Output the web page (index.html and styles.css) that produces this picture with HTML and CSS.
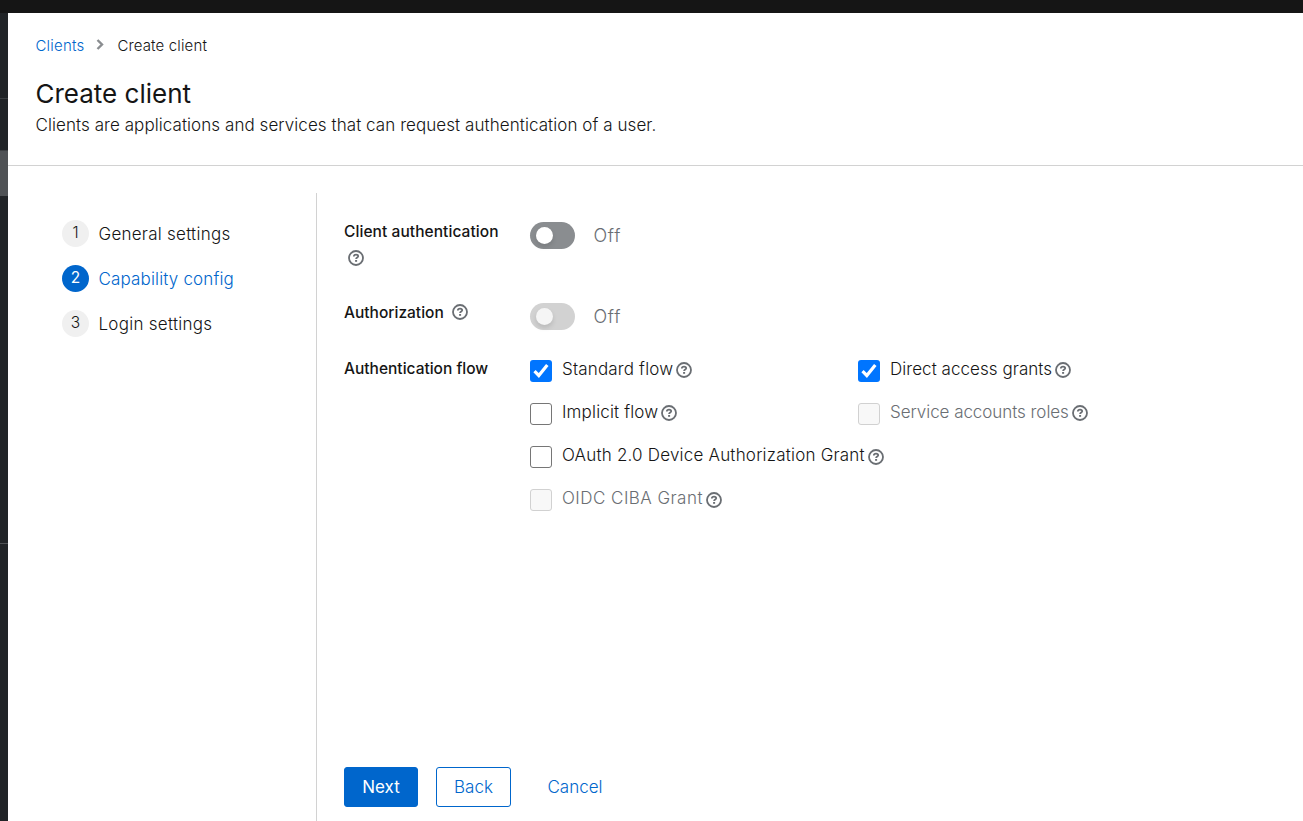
FILE: index.html
```
<!DOCTYPE html>
<html lang="en">
<head>
<meta charset="utf-8">
<title>Create client</title>
<link rel="stylesheet" href="styles.css">
</head>
<body>
<svg width="0" height="0" class="defs">
  <symbol id="help" viewBox="0 0 16 16">
    <circle cx="8" cy="8" r="7" fill="none" stroke="currentColor" stroke-width="1.8"/>
    <path d="M5.8 6.5C5.9 5.2 6.8 4.7 8 4.7C9.3 4.7 10.2 5.4 10.2 6.3C10.2 7.6 8.1 7.5 8.1 9.1" fill="none" stroke="currentColor" stroke-width="1.8"/>
    <rect x="7.1" y="10" width="2" height="1.8" fill="currentColor"/>
  </symbol>
</svg>
<div class="topbar"></div>
<div class="shell">
  <aside class="sidebar">
    <div class="side-block side-first"></div>
    <div class="side-block side-second"></div>
    <div class="side-block side-active"></div>
    <div class="side-block side-third"></div>
    <div class="side-block side-last"></div>
  </aside>
  <main class="main">
    <header class="header">
      <nav class="breadcrumb">
        <a class="link crumb-link">Clients</a>
        <svg class="chevron" viewBox="0 0 8 11"><path d="M1.5 1L6 5.5L1.5 10" fill="none" stroke="#8a8d90" stroke-width="2.4"/></svg>
        <span class="crumb-current">Create client</span>
      </nav>
      <h1 class="title">Create client</h1>
      <p class="description">Clients are applications and services that can request authentication of a user.</p>
    </header>
    <div class="wizard">
      <ol class="steps">
        <li class="step"><span class="num">1</span><span class="step-name step-a">General settings</span></li>
        <li class="step current"><span class="num">2</span><span class="step-name step-b">Capability config</span></li>
        <li class="step"><span class="num">3</span><span class="step-name step-c">Login settings</span></li>
      </ol>
      <section class="content">
        <form class="form">
          <div class="row row-auth">
            <div class="label stacked"><span class="label-a">Client authentication</span><svg class="help"><use href="#help"/></svg></div>
            <div class="control"><span class="switch"><span class="knob"></span></span><span class="off">Off</span></div>
          </div>
          <div class="row row-authz">
            <div class="label"><span class="label-b">Authorization</span><svg class="help"><use href="#help"/></svg></div>
            <div class="control"><span class="switch disabled"><span class="knob"></span></span><span class="off">Off</span></div>
          </div>
          <div class="row row-flow">
            <div class="label"><span class="label-c">Authentication flow</span></div>
            <div class="flows">
              <div class="flow raised"><span class="box checked"><svg viewBox="0 0 22 22"><path d="M4.5 11.2L8.8 15.5L17.3 5" fill="none" stroke="#fff" stroke-width="3.2"/></svg></span><span class="flow-a">Standard flow</span><svg class="help"><use href="#help"/></svg></div>
              <div class="flow raised"><span class="box checked"><svg viewBox="0 0 22 22"><path d="M4.5 11.2L8.8 15.5L17.3 5" fill="none" stroke="#fff" stroke-width="3.2"/></svg></span><span class="flow-b">Direct access grants</span><svg class="help"><use href="#help"/></svg></div>
              <div class="flow raised"><span class="box"></span><span class="flow-c">Implicit flow</span><svg class="help"><use href="#help"/></svg></div>
              <div class="flow raised inactive"><span class="box"></span><span class="flow-d">Service accounts roles</span><svg class="help"><use href="#help"/></svg></div>
              <div class="flow wide"><span class="box"></span><span class="flow-e">OAuth 2.0 Device Authorization Grant</span><svg class="help"><use href="#help"/></svg></div>
              <div class="flow wide inactive"><span class="box"></span><span class="flow-f">OIDC CIBA Grant</span><svg class="help"><use href="#help"/></svg></div>
            </div>
          </div>
        </form>
        <footer class="actions">
          <button class="btn primary"><span class="btn-a">Next</span></button>
          <button class="btn secondary"><span class="btn-b">Back</span></button>
          <button class="btn plain"><span class="btn-c">Cancel</span></button>
        </footer>
      </section>
    </div>
  </main>
</div>
</body>
</html>
```
FILE: styles.css
```
* { box-sizing: border-box; }
body { margin: 0; height: 821px; overflow: hidden; display: flex; flex-direction: column; background: #fff; color: #151515; font: 300 17px/27px Inter, sans-serif; }
.defs { position: absolute; }
.topbar { height: 13px; background: #151515; flex: none; }
.shell { flex: 1; display: flex; min-height: 0; }
.sidebar { width: 8px; background: #212427; flex: none; display: flex; flex-direction: column; }
.side-block { border-bottom: 1px solid #3c3f42; flex: none; }
.side-first { height: 86px; }
.side-second { height: 52px; }
.side-active { height: 45px; background: #4f5255; border-color: #4f5255; }
.side-third { height: 348px; border-color: #4f5255; }
.side-last { flex: 1; border: 0; }
.main { flex: 1; display: flex; flex-direction: column; min-width: 0; }
.header { height: 153px; padding: 20px 27.5px 0; border-bottom: 1px solid #d2d2d2; flex: none; }
.breadcrumb { display: flex; align-items: center; height: 24px; font-size: 15px; }
.crumb-link { letter-spacing: .2px; }
.crumb-current { letter-spacing: .14px; }
.chevron { width: 8px; height: 11px; margin: 0 13px 2px 12px; }
.link { color: #06c; }
.title { margin: 19px 0 0; font-size: 26px; line-height: 35px; font-weight: 400; }
.description { margin: 1px 0 0; letter-spacing: .065px; }
span, .description, .title, .crumb-link { white-space: nowrap; }
.wizard { flex: 1; display: flex; padding-top: 27px; min-height: 0; }
.steps { width: 309px; margin: 0; padding: 27px 0 0 54px; border-right: 1px solid #d2d2d2; list-style: none; display: flex; flex-direction: column; gap: 18px; }
.step { display: flex; gap: 9.5px; height: 27px; }
.step-name { line-height: 29px; }
.step-a { letter-spacing: .25px; }
.step-b { letter-spacing: .15px; }
.step-c { letter-spacing: .27px; }
.num { width: 27px; height: 27px; border-radius: 50%; background: #f0f0f0; text-align: center; font-size: 15.5px; line-height: 26px; }
.current { color: #06c; }
.current .num { background: #06c; color: #fff; font-weight: 400; }
.content { flex: 1; display: flex; flex-direction: column; justify-content: space-between; padding: 27px 27px 14px; }
.row { display: grid; grid-template-columns: 186px 1fr; }
.row-auth { height: 81px; padding-top: 2px; }
.row-authz { height: 57px; padding-top: 2px; }
.label { display: flex; align-items: center; align-self: start; height: 20px; margin-top: -1px; font-size: 15.5px; font-weight: 500; gap: 8px; }
.label-a { line-height: 21px; letter-spacing: .07px; }
.row-flow .label { margin-top: 0; }
.stacked { flex-direction: column; align-items: flex-start; height: 48px; gap: 0; }
.stacked .help { margin: 8px 0 0 4px; }
.help { width: 16px; height: 16px; color: #6a6e73; flex: none; }
.control { display: flex; gap: 18.5px; height: 27px; color: #6a6e73; }
.off { font-size: 18px; line-height: 28px; letter-spacing: .7px; }
.switch { width: 45px; height: 27px; border-radius: 14px; background: #8a8d90; padding: 5px 5px 5px 5.5px; }
.knob { display: block; width: 17px; height: 17px; border-radius: 50%; background: #fff; box-shadow: 0 3px 5px rgba(0,0,0,.12); }
.disabled { background: #d2d2d2; }
.disabled .knob { background: #f5f5f5; }
.flows { display: grid; grid-template-columns: 328px 1fr; row-gap: 16px; padding-top: 1px; }
.flow { display: flex; align-items: flex-start; height: 27px; line-height: 20px; }
.flow-a, .flow-c { letter-spacing: .16px; }
.flow-b { letter-spacing: .05px; }
.flow-d { letter-spacing: -.05px; }
.flow-e { letter-spacing: .2px; }
.flow-f { letter-spacing: .46px; }
.wide { grid-column: 1 / 3; }
.flow .help { margin: 4px 0 0 3px; }
.raised .help { margin-top: 3px; }
.box { width: 22px; height: 22px; border: 1px solid #767676; border-radius: 3px; margin: 1px 10px 0 0; flex: none; }
.raised .box { height: 21.5px; }
.box svg { display: block; width: 22px; height: 22px; }
.checked { background: #0075ff; border: 0; }
.inactive { color: #6a6e73; }
.inactive .box { background: #f8f8f8; border-color: #d1d1d1; }
.actions { display: flex; gap: 18px; height: 40px; }
.btn { height: 40px; padding: 0; border-radius: 3px; font: inherit; border: 1px solid #06c; background: #fff; color: #06c; }
.primary { width: 74px; background: #06c; color: #fff; font-weight: 400; }
.secondary { width: 75px; }
.plain { width: 92px; border: 0; }
```
